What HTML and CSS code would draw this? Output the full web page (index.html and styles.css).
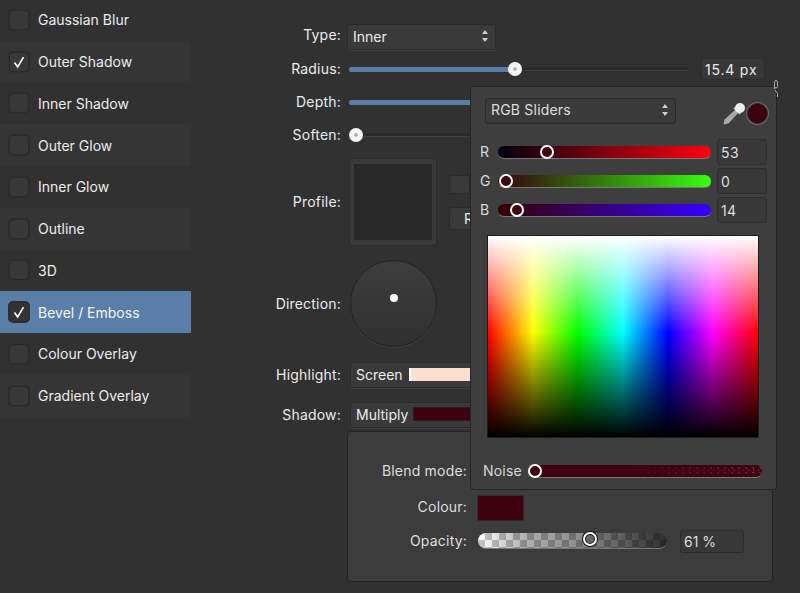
FILE: index.html
```html
<!DOCTYPE html>
<html lang="en">
<head>
  <meta charset="UTF-8">
  <title>Layer Effects</title>
  <link rel="stylesheet" href="styles.css">
</head>
<body>
  <div class="app">
    <div class="sidebar">
      <div class="effect"><span class="check"></span>Gaussian Blur</div>
      <div class="effect"><span class="check"><svg viewBox="0 0 20 20"><path d="M5 10.5l3.5 5L15 4.500"/></svg></span>Outer Shadow</div>
      <div class="effect"><span class="check"></span>Inner Shadow</div>
      <div class="effect"><span class="check"></span>Outer Glow</div>
      <div class="effect"><span class="check"></span>Inner Glow</div>
      <div class="effect"><span class="check"></span>Outline</div>
      <div class="effect"><span class="check"></span>3D</div>
      <div class="effect selected"><span class="check"><svg viewBox="0 0 20 20"><path d="M5 10.5l3.5 5L15 4.500"/></svg></span>Bevel / Emboss</div>
      <div class="effect"><span class="check"></span>Colour Overlay</div>
      <div class="effect"><span class="check"></span>Gradient Overlay</div>
    </div>

    <div class="main">
      <div class="row row-type">
        <label>Type:</label>
        <div class="select select-type">Inner
          <span class="arrows"><i class="up"></i><i class="down"></i></span>
        </div>
      </div>
      <div class="row row-radius">
        <label>Radius:</label>
        <div class="slider"><div class="slider-fill fill-radius"></div><span class="knob knob-radius"></span></div>
        <div class="field field-radius">15.4 px</div>
      </div>
      <div class="row row-depth">
        <label>Depth:</label>
        <div class="slider"><div class="slider-fill fill-depth"></div></div>
      </div>
      <div class="row row-soften">
        <label>Soften:</label>
        <div class="slider"><span class="knob knob-soften"></span></div>
      </div>
      <div class="row row-profile">
        <label>Profile:</label>
        <div class="profile-box"><div class="profile-inner"></div></div>
        <div class="profile-side">
          <span class="mini-check"></span>
          <span class="reset">R</span>
        </div>
      </div>
      <div class="row row-direction">
        <label>Direction:</label>
        <div class="dial"><span class="dial-dot"></span></div>
      </div>
      <div class="row row-highlight">
        <label>Highlight:</label>
        <div class="select select-blend">Screen<span class="swatch swatch-light"></span></div>
      </div>
      <div class="row row-shadow">
        <label>Shadow:</label>
        <div class="select select-blend">Multiply<span class="swatch swatch-dark"></span></div>
      </div>

      <div class="panel">
        <div class="panel-row panel-blend"><label>Blend mode:</label></div>
        <div class="panel-row panel-colour"><label>Colour:</label><span class="colour-well"></span></div>
        <div class="panel-row panel-opacity">
          <label>Opacity:</label>
          <div class="opacity-slider"><span class="ring ring-opacity"></span></div>
          <div class="field field-opacity">61 %</div>
        </div>
      </div>
    </div>
  </div>

  <div class="picker">
    <div class="picker-top">
      <div class="select select-mode">RGB Sliders
        <span class="arrows"><i class="up"></i><i class="down"></i></span>
      </div>
      <svg class="dropper" viewBox="0 0 24 24">
        <path class="dropper-glass" d="M14 7L2.500 17.500 1.500 22.500 6.500 21.500 17 10z"/>
        <path class="dropper-neck" d="M11.500 6.500L13.500 4.500 19.500 10.500 17.500 12.500z"/>
        <circle class="dropper-bulb" cx="18" cy="6" r="5"/>
      </svg>
      <span class="current-colour"></span>
    </div>
    <div class="rgb-row">
      <span class="rgb-label">R</span>
      <div class="rgb-track track-r"><span class="ring ring-r"></span></div>
      <div class="field field-rgb">53</div>
    </div>
    <div class="rgb-row">
      <span class="rgb-label">G</span>
      <div class="rgb-track track-g"><span class="ring ring-g"></span></div>
      <div class="field field-rgb">0</div>
    </div>
    <div class="rgb-row">
      <span class="rgb-label">B</span>
      <div class="rgb-track track-b"><span class="ring ring-b"></span></div>
      <div class="field field-rgb">14</div>
    </div>
    <div class="colour-map"></div>
    <div class="noise-row">
      <span class="noise-label">Noise</span>
      <div class="noise-track"><span class="ring ring-noise"></span></div>
    </div>
  </div>

  <svg class="link-icon" viewBox="0 0 6 20"><path d="M1.500 10V3a1.500 1.500 0 0 1 3 0v4.500a1.500 1.500 0 0 1-3 0M2 11l2.500 3.500V18"/></svg>
</body>
</html>
```
FILE: styles.css
```css
* {
  box-sizing: border-box;
}
html, body {
  margin: 0;
  height: 100%;
}
body {
  position: relative;
  overflow: hidden;
  background-color: #313131;
  color: #ececec;
  font-family: Inter, "Open Sans", sans-serif;
  font-size: 14px;
}
.app {
  display: flex;
  height: 593px;
}

/* effect list */
.sidebar {
  width: 191px;
  flex-shrink: 0;
  margin-top: -1px;
}
.effect {
  display: flex;
  align-items: center;
  gap: 9px;
  height: 41.75px;
  padding-left: 9px;
}
.effect:nth-child(even) {
  background-color: #353535;
}
.effect.selected {
  background-color: #5a7ea8;
  color: #f2f5f8;
}
.check {
  width: 20px;
  height: 20px;
  flex-shrink: 0;
  background-color: #383838;
  border: 1px solid #2a2a2a;
  border-radius: 4px;
  box-shadow: 0 0 0 1px #2f2f2f;
}
.check svg {
  display: block;
  width: 18px;
  height: 18px;
}
.check path {
  fill: none;
  stroke: #fff;
  stroke-width: 1.8;
}
.selected .check {
  background-color: #333;
  border-color: #26303c;
}

/* right side controls */
.main {
  flex: 1;
  padding-top: 24px;
}
.row {
  display: flex;
  align-items: center;
}
.row label {
  width: 150px;
  flex-shrink: 0;
  margin-top: -2px;
  text-align: right;
  letter-spacing: 0.2px;
}
.row-type { height: 26px; }
.row-type label { margin-top: -5px; }
.row-radius { height: 38px; }
.row-depth { height: 28px; }
.row-soften { height: 38px; }
.row-profile { height: 96px; }
.row-direction { height: 108px; }
.row-highlight { height: 34px; }
.row-shadow { height: 34px; margin-top: 6px; }

.select {
  position: relative;
  display: flex;
  align-items: center;
  height: 26px;
  padding: 0 0 2px 5px;
  background-color: #3a3a3a;
  border: 1px solid #2a2a2a;
  border-radius: 3px;
  box-shadow: 0 1px 0 #3f3f3f;
}
.select-type {
  width: 149px;
  margin-left: 6px;
}
.select-blend {
  width: 200px;
  margin-left: 9px;
}
.arrows {
  position: absolute;
  right: 7px;
  top: 5px;
  display: flex;
  flex-direction: column;
  gap: 4px;
}
.arrows i {
  display: block;
  border-left: 3px solid transparent;
  border-right: 3px solid transparent;
}
.arrows .up { border-bottom: 4px solid #cfcfcf; }
.arrows .down { border-top: 4px solid #cfcfcf; }

.slider {
  position: relative;
  width: 340px;
  height: 4px;
  margin-left: 8px;
  background-color: #2a2a2a;
  border-bottom: 1px solid #404040;
  border-radius: 2px;
}
.slider-fill {
  height: 5px;
  background-color: #5a7ea8;
  border-radius: 2px;
}
.fill-radius { width: 166px; }
.fill-depth { width: 200px; }
.knob {
  position: absolute;
  top: -5px;
  width: 14px;
  height: 14px;
  border-radius: 50%;
  background: radial-gradient(circle, #b0b0b0 0 1.500px, #f4f4f4 2px);
}
.knob-radius { left: 159px; }
.knob-soften { left: 0; }

.field {
  display: flex;
  align-items: center;
  background-color: #383838;
  border: 1px solid #2d2d2d;
  border-radius: 3px;
  padding-left: 3px;
}
.field-radius {
  width: 64px;
  height: 22px;
  margin-left: 12px;
  letter-spacing: 0.8px;
}

.profile-box {
  width: 88px;
  height: 88px;
  margin-left: 8px;
  padding: 5px 4px;
  background-color: #3a3a3a;
  border: 1px solid #2a2a2a;
  border-radius: 3px;
}
.profile-inner {
  height: 100%;
  background-color: #282828;
}
.profile-side {
  display: flex;
  flex-direction: column;
  align-items: flex-start;
  gap: 13px;
  margin-left: 12px;
}
.mini-check {
  width: 21px;
  height: 19px;
  background-color: #3a3a3a;
  border: 1px solid #2a2a2a;
  border-radius: 3px;
}
.reset {
  width: 80px;
  height: 23px;
  padding-left: 14px;
  line-height: 21px;
  border: 1px solid #2a2a2a;
  border-radius: 3px;
  background-color: #3a3a3a;
}

.dial {
  position: relative;
  width: 87px;
  height: 87px;
  margin: -2px 0 0 9px;
  border-radius: 50%;
  background: linear-gradient(#3d3d3d, #303030);
  border: 1px solid #232323;
  box-shadow: 0 1px 0 #414141;
}
.dial-dot {
  position: absolute;
  left: 39px;
  top: 33px;
  width: 8px;
  height: 8px;
  border-radius: 50%;
  background-color: #fff;
}

.swatch {
  height: 13px;
  flex: 1;
  margin-left: 6px;
}
.swatch-light {
  background-color: #fbdfcf;
  border-left: 2px solid #fff;
}
.swatch-dark {
  height: 14px;
  background-color: #3f0010;
  border: 1px solid #222;
  margin-left: 5px;
}

/* sub panel below the shadow row */
.panel {
  width: 426px;
  height: 151px;
  margin: -1px 0 0 156px;
  padding-top: 21px;
  background-color: #3c3c3c;
  border: 1px solid #252525;
  border-radius: 4px;
}
.panel-row {
  display: flex;
  align-items: center;
}
.panel-row label {
  width: 119px;
  flex-shrink: 0;
  margin-top: -2px;
  text-align: right;
  letter-spacing: 0.2px;
  color: #dedede;
}
.panel-blend { height: 36px; }
.panel-colour { height: 38px; }
.panel-colour label { margin-top: -4px; }
.panel-opacity { height: 26px; margin-top: 1px; }
.colour-well {
  width: 47px;
  height: 26px;
  margin-left: 10px;
  background-color: #3f0010;
  border: 1px solid #2c2c2c;
  border-radius: 2px;
}
.opacity-slider {
  position: relative;
  width: 189px;
  height: 16px;
  margin-left: 11px;
  border-radius: 8px;
  border-bottom: 1px solid #777;
  background:
    conic-gradient(rgba(0, 0, 0, 0.22) 25%, transparent 0 50%, rgba(0, 0, 0, 0.22) 0 75%, transparent 0) 0 0 / 14px 14px,
    linear-gradient(90deg, #fff, #b0b0b0 25%, #8a8a8a 55%, #2e2e2e);
}
.field-opacity {
  width: 64px;
  height: 23px;
  margin-left: 13px;
  color: #dedede;
}

.ring {
  position: absolute;
  top: -1px;
  width: 14px;
  height: 14px;
  border-radius: 50%;
  border: 2px solid #fff;
  background-color: #3f0010;
}
.ring-opacity {
  left: 105px;
  background-color: #666;
  box-shadow: inset 0 0 0 1px #111, 0 0 0 1px #111;
}

/* colour picker popover */
.link-icon {
  position: absolute;
  left: 773px;
  top: 79px;
  width: 6px;
  height: 20px;
}
.link-icon path {
  fill: none;
  stroke: #a8a8a8;
  stroke-width: 1;
}
.picker {
  position: absolute;
  left: 470px;
  top: 86px;
  width: 307px;
  height: 404px;
  padding: 10px 0 0 14px;
  background-color: #3e3e3e;
  border: 1px solid #252525;
  border-radius: 4px;
}
.picker-top {
  display: flex;
  align-items: center;
  height: 27px;
  margin-bottom: 15px;
  color: #dedede;
}
.select-mode {
  width: 191px;
  letter-spacing: 0.2px;
}
.dropper {
  width: 24px;
  height: 24px;
  margin: 6px 0 0 46px;
}
.dropper-glass { fill: #a9a9a9; }
.dropper-neck { fill: #d0d0d0; }
.dropper-bulb { fill: #ededed; }
.current-colour {
  width: 21px;
  height: 21px;
  margin: 6px 0 0 1px;
  border-radius: 50%;
  background-color: #3f0010;
  border: 1px solid #2a2a2a;
  box-shadow: 0 0 0 1px #666;
}
.rgb-row {
  display: flex;
  align-items: center;
  height: 26px;
  margin-bottom: 3px;
}
.rgb-label {
  width: 18px;
  margin: -2px 0 0 -5px;
  color: #d8d8d8;
}
.rgb-track {
  position: relative;
  width: 213px;
  height: 13px;
  border-radius: 6px;
  border-bottom: 1px solid #777;
}
.track-r { background: linear-gradient(90deg, #00000e, #ff000e); }
.track-g { background: linear-gradient(90deg, #35000e, #35ff0e); }
.track-b { background: linear-gradient(90deg, #350000, #3500ff); }
.ring-r { left: 42px; }
.ring-g { left: 1px; }
.ring-b { left: 12px; }
.field-rgb {
  width: 50px;
  height: 26px;
  margin-left: 6px;
  letter-spacing: 0.4px;
  color: #dedede;
}
.colour-map {
  width: 272px;
  height: 203px;
  margin: 12px 0 0 2px;
  border: 1px solid #1c1c1c;
  background:
    linear-gradient(#fff, rgba(255, 255, 255, 0) 48%, rgba(0, 0, 0, 0) 48%, #000),
    linear-gradient(90deg, #f00, #ff0 16.7%, #0f0 33.3%, #0ff 50%, #00f 66.7%, #f0f 83.3%, #f00);
}
.noise-row {
  display: flex;
  align-items: center;
  height: 14px;
  margin-top: 26px;
}
.noise-label {
  width: 50px;
  margin: -2px 0 0 -2px;
  color: #d8d8d8;
  letter-spacing: 0.2px;
}
.noise-track {
  position: relative;
  width: 229px;
  height: 13px;
  border-radius: 6px;
  border-bottom: 1px solid #777;
  background:
    linear-gradient(90deg, #3f0010 35%, rgba(63, 0, 16, 0.35)),
    radial-gradient(circle, #8a4050 0 1px, transparent 1px) 0 0 / 7px 5px,
    radial-gradient(circle, #733040 0 1px, transparent 1px) 3px 2px / 5px 7px,
    #3f0010;
}
.ring-noise { left: -5px; }
```
